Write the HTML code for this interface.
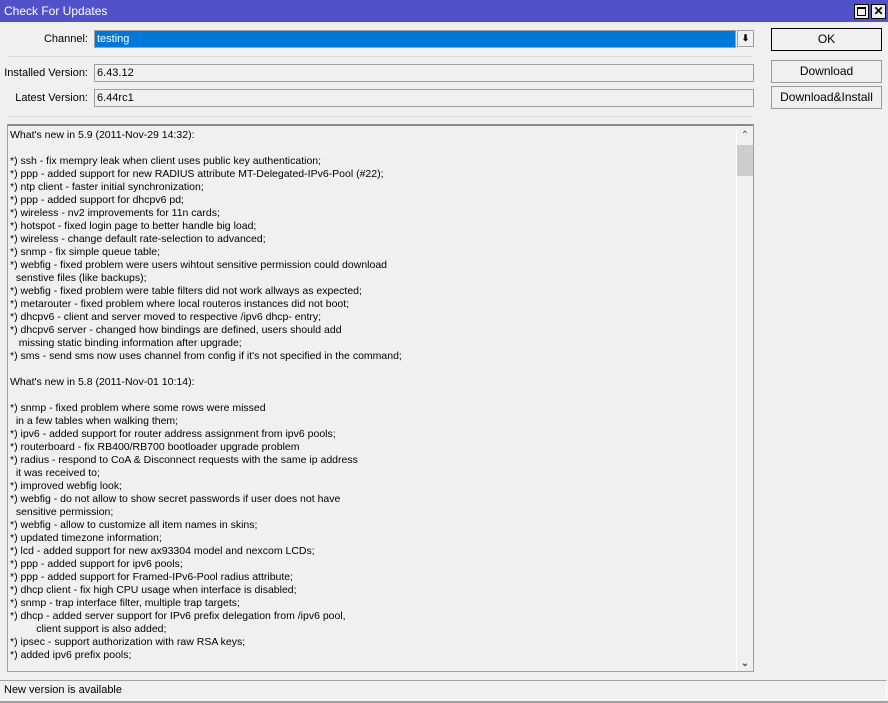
<!DOCTYPE html>
<html><head><meta charset="utf-8"><style>
*{margin:0;padding:0;box-sizing:border-box}
body{width:888px;height:703px;background:#f0f0f0;font-family:"Liberation Sans",Arial,sans-serif;font-size:11px;color:#000;position:relative;overflow:hidden}
.title{position:absolute;left:0;top:0;width:888px;height:22px;background:#5151c9;color:#fff;font-size:12px;line-height:23px;padding-left:4px}
.tb{position:absolute;top:4px;width:15px;height:15px;background:#f0f0f0;border:1px solid #000}
.lbl{position:absolute;text-align:right;width:88px;left:0}
.fld{position:absolute;left:94px;width:660px;height:18px;border:1px solid #a0a0a0;background:#f0f0f0;padding-left:2px;line-height:17px}
.sep{position:absolute;left:7px;width:746px;height:1px;background:#d8d8d8}
.btn{position:absolute;left:771px;width:111px;height:23px;border:1px solid #999;background:#f0f0f0;text-align:center;line-height:21px;font-size:12px}
.box{position:absolute;left:7px;top:124px;width:747px;height:548px;border:1px solid #a0a0a0;border-top:2px solid #8a8a8a;background:#f0f0f0}
.txt{position:absolute;left:2px;top:3px;white-space:pre;line-height:13px;font-size:10.5px}
.sb{position:absolute;right:0;top:0;width:17px;height:100%;border-left:1px solid #fff}
</style></head><body>
<div class="title">Check For Updates</div>
<div class="tb" style="left:854px"><div style="position:absolute;left:2px;top:2px;width:9px;height:9px;border:1px solid #000;border-top-width:2px"></div></div>
<div class="tb" style="left:871px;font-size:12px;font-weight:bold;line-height:13px;text-align:center">✕</div>

<div class="lbl" style="top:33px">Channel:</div>
<div style="position:absolute;left:94px;top:30px;width:642px;height:18px;border:1px solid #a0a0a0;background:#0078d7;color:#fff;padding-left:2px;line-height:17px">testing</div>
<div style="position:absolute;left:737px;top:30px;width:17px;height:17px;border:1px solid #a0a0a0;background:#f0f0f0;text-align:center;font-size:9px;line-height:15px;font-weight:bold">&#11015;</div>
<div class="sep" style="top:56px"></div>
<div class="lbl" style="top:67px">Installed Version:</div>
<div class="fld" style="top:64px">6.43.12</div>
<div class="lbl" style="top:92px">Latest Version:</div>
<div class="fld" style="top:89px">6.44rc1</div>
<div class="sep" style="top:116px"></div>

<div class="btn" style="top:28px;border-color:#000">OK</div>
<div class="btn" style="top:60px">Download</div>
<div class="btn" style="top:86px">Download&amp;Install</div>

<div class="box">
<div class="txt">What's new in 5.9 (2011-Nov-29 14:32):

*) ssh - fix mempry leak when client uses public key authentication;
*) ppp - added support for new RADIUS attribute MT-Delegated-IPv6-Pool (#22);
*) ntp client - faster initial synchronization;
*) ppp - added support for dhcpv6 pd;
*) wireless - nv2 improvements for 11n cards;
*) hotspot - fixed login page to better handle big load;
*) wireless - change default rate-selection to advanced;
*) snmp - fix simple queue table;
*) webfig - fixed problem were users wihtout sensitive permission could download
  senstive files (like backups);
*) webfig - fixed problem were table filters did not work allways as expected;
*) metarouter - fixed problem where local routeros instances did not boot;
*) dhcpv6 - client and server moved to respective /ipv6 dhcp- entry;
*) dhcpv6 server - changed how bindings are defined, users should add
   missing static binding information after upgrade;
*) sms - send sms now uses channel from config if it's not specified in the command;

What's new in 5.8 (2011-Nov-01 10:14):

*) snmp - fixed problem where some rows were missed
  in a few tables when walking them;
*) ipv6 - added support for router address assignment from ipv6 pools;
*) routerboard - fix RB400/RB700 bootloader upgrade problem
*) radius - respond to CoA &amp; Disconnect requests with the same ip address
  it was received to;
*) improved webfig look;
*) webfig - do not allow to show secret passwords if user does not have
  sensitive permission;
*) webfig - allow to customize all item names in skins;
*) updated timezone information;
*) lcd - added support for new ax93304 model and nexcom LCDs;
*) ppp - added support for ipv6 pools;
*) ppp - added support for Framed-IPv6-Pool radius attribute;
*) dhcp client - fix high CPU usage when interface is disabled;
*) snmp - trap interface filter, multiple trap targets;
*) dhcp - added server support for IPv6 prefix delegation from /ipv6 pool,
         client support is also added;
*) ipsec - support authorization with raw RSA keys;
*) added ipv6 prefix pools;</div>
<div class="sb">
<div style="position:absolute;top:4px;width:16px;text-align:center;font-size:10px;color:#555">&#8963;</div>
<div style="position:absolute;top:19px;left:0;width:16px;height:31px;background:#cdcdcd"></div>
<div style="position:absolute;bottom:2px;width:16px;text-align:center;font-size:10px;color:#555;font-weight:bold">&#8964;</div>
</div>
</div>

<div style="position:absolute;left:0;top:680px;width:887px;height:20px;border-top:1px solid #a0a0a0;border-right:1px solid #fff;border-bottom:1px solid #fff;padding-left:4px;line-height:19px">New version is available</div>
<div style="position:absolute;left:0;top:701px;width:888px;height:2px;background:#a0a0a0"></div>
</body></html>
